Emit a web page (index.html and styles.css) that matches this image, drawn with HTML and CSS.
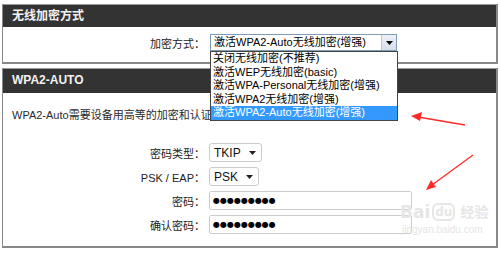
FILE: index.html
```html
<!DOCTYPE html>
<html lang="zh-CN">
<head>
  <meta charset="UTF-8">
  <meta name="viewport" content="width=device-width, initial-scale=1.0">
  <title>无线加密方式</title>
  <link rel="stylesheet" href="styles.css">
</head>
<body>
  <div class="page">
    <section class="panel">
      <h2 class="panel-head">无线加密方式</h2>
      <div class="panel-body top">
        <div class="form">
          <label>加密方式：</label>
          <div class="combo">
            <span class="combo-text">激活WPA2-Auto无线加密(增强)</span>
            <span class="combo-btn">
              <svg width="7" height="4" viewBox="0 0 7 4"><path d="M0 0h7L3.5 4z" fill="#000"/></svg>
            </span>
            <ul class="combo-list">
              <li>关闭无线加密(不推荐)</li>
              <li>激活WEP无线加密(basic)</li>
              <li>激活WPA-Personal无线加密(增强)</li>
              <li>激活WPA2无线加密(增强)</li>
              <li class="on">激活WPA2-Auto无线加密(增强)</li>
            </ul>
          </div>
        </div>
      </div>
    </section>

    <section class="panel">
      <h2 class="panel-head tall">WPA2-AUTO</h2>
      <div class="panel-body">
        <p class="desc">WPA2-Auto需要设备用高等的加密和认证方式。</p>
        <div class="form">
          <label>密码类型：</label>
          <div class="pick">TKIP <svg width="7" height="4" viewBox="0 0 7 4"><path d="M0 0h7L3.5 4z" fill="#222"/></svg></div>

          <label>PSK / EAP：</label>
          <div class="pick">PSK <svg width="7" height="4" viewBox="0 0 7 4"><path d="M0 0h7L3.5 4z" fill="#222"/></svg></div>

          <label>密码：</label>
          <div class="pw">●●●●●●●●●</div>

          <label>确认密码：</label>
          <div class="pw">●●●●●●●●●</div>
        </div>
      </div>
    </section>

    <svg class="marks" width="500" height="253" viewBox="0 0 500 253">
      <line x1="465" y1="125" x2="418" y2="117" stroke="#ff2a2a" stroke-width="1.3"/>
      <path d="M411 116l11-4-2 9z" fill="#ff2a2a"/>
      <line x1="473" y1="155" x2="432" y2="185" stroke="#ff2a2a" stroke-width="1.3"/>
      <path d="M426 190l5-10 5 7z" fill="#ff2a2a"/>
    </svg>

    <div class="watermark">
      <span class="wm-logo">Bai<b>du</b><i>经验</i></span>
      <span class="wm-url">jingyan.baidu.com</span>
    </div>
  </div>
</body>
</html>
```

FILE: styles.css
```css
body {
  margin: 0;
  background: #fff;
  font-family: 'Liberation Sans', 'Noto Sans CJK SC', sans-serif;
  font-size: 11px;
  color: #222;
}
.page {
  position: relative;
  width: 500px;
  height: 253px;
  padding-top: 4px;
  box-sizing: border-box;
}
.panel {
  margin: 0 2px 4px 2px;
  border: 1px solid #888;
  border-top: none;
  border-right-width: 2px;
  border-bottom-width: 2px;
}
.panel-head {
  margin: 0;
  height: 22px;
  line-height: 22px;
  border-top: 1px solid #9a9a9a;
  background: #333;
  color: #f2f2f2;
  font-size: 12px;
  font-weight: bold;
  padding-left: 9px;
}
.panel-head.tall {
  height: 24px;
  line-height: 23px;
}
.panel-body {
  padding: 15px 0 12px 0;
}
.panel-body.top {
  padding: 7px 0 11px 0;
}
.desc {
  margin: 0 0 21px 9px;
  line-height: 14px;
  color: #2a2a2a;
}
.form {
  display: grid;
  grid-template-columns: 202px auto;
  column-gap: 4px;
  row-gap: 5px;
  align-items: center;
  justify-items: start;
}
.form label {
  justify-self: end;
  color: #222;
}
.combo {
  position: relative;
  margin-left: 1px;
  width: 185px;
  height: 15px;
  border: 1px solid #7f9db9;
  display: flex;
  align-items: center;
  background: #fff;
}
.combo-text {
  flex: 1;
  padding-left: 3px;
  line-height: 15px;
  color: #000;
}
.combo-btn {
  width: 14px;
  height: 15px;
  display: flex;
  align-items: center;
  justify-content: center;
  background: linear-gradient(#eef2f8, #d6deeb);
  border-left: 1px solid #b8c6da;
}
.combo-list {
  position: absolute;
  top: 16px;
  left: -1px;
  width: 186px;
  margin: 0;
  padding: 0;
  list-style: none;
  border: 1px solid #444;
  background: #fff;
  z-index: 2;
}
.combo-list li {
  height: 13.5px;
  line-height: 13.5px;
  padding-left: 2px;
  color: #000;
  white-space: nowrap;
}
.combo-list li.on {
  background: #3399ff;
  color: #fff;
}
.pick {
  height: 17px;
  padding: 0 5px 0 4px;
  border: 1px solid #ccc;
  border-radius: 3px;
  display: flex;
  align-items: center;
  gap: 8px;
  font-size: 12px;
  color: #111;
}
.pw {
  width: 203px;
  height: 19px;
  box-sizing: border-box;
  padding: 0 3px;
  border: 1px solid #ccc;
  border-radius: 2px;
  font-family: 'DejaVu Sans', sans-serif;
  font-size: 8px;
  line-height: 17px;
  color: #000;
}
.marks {
  position: absolute;
  left: 0;
  top: 0;
  pointer-events: none;
  z-index: 3;
}
.watermark {
  position: absolute;
  left: 400px;
  top: 200px;
  display: flex;
  flex-direction: column;
  color: #e6e6e6;
  white-space: nowrap;
  z-index: 3;
}
.wm-logo {
  display: flex;
  align-items: center;
  gap: 2px;
  font-family: 'DejaVu Sans', 'Noto Sans CJK SC', sans-serif;
  font-size: 17px;
  font-weight: bold;
  line-height: 24px;
}
.wm-logo b {
  font-size: 12px;
  line-height: 14px;
  border: 2px solid #e6e6e6;
  border-radius: 6px;
  padding: 0 1px;
}
.wm-logo i {
  font-style: normal;
  font-size: 14px;
  margin-left: 3px;
}
.wm-url {
  font-size: 10px;
  line-height: 12px;
  padding-left: 2px;
}
```
